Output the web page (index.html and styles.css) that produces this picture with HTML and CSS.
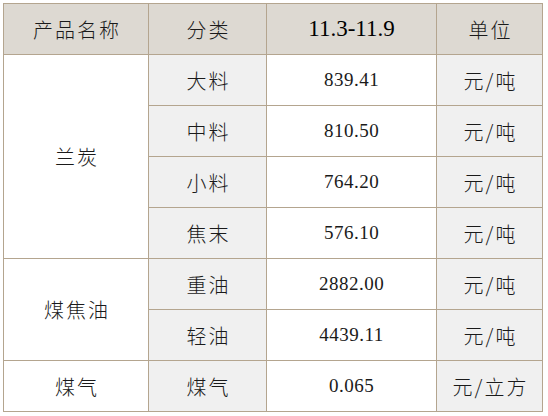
FILE: index.html
```html
<!DOCTYPE html>
<html lang="zh">
<head>
<meta charset="utf-8">
<link rel="stylesheet" href="styles.css">
</head>
<body>
<table class="price-table">
  <colgroup>
    <col class="c1"><col class="c2"><col class="c3"><col class="c4">
  </colgroup>
  <thead>
    <tr>
      <th class="cn">产品名称</th>
      <th class="cn">分类</th>
      <th class="date">11.3-11.9</th>
      <th class="cn">单位</th>
    </tr>
  </thead>
  <tbody>
    <tr>
      <td class="cn" rowspan="4">兰炭</td>
      <td class="cn gray">大料</td>
      <td class="num">839.41</td>
      <td class="cn gray">元/吨</td>
    </tr>
    <tr>
      <td class="cn gray">中料</td>
      <td class="num">810.50</td>
      <td class="cn gray">元/吨</td>
    </tr>
    <tr>
      <td class="cn gray">小料</td>
      <td class="num">764.20</td>
      <td class="cn gray">元/吨</td>
    </tr>
    <tr>
      <td class="cn gray">焦末</td>
      <td class="num">576.10</td>
      <td class="cn gray">元/吨</td>
    </tr>
    <tr>
      <td class="cn" rowspan="2">煤焦油</td>
      <td class="cn gray">重油</td>
      <td class="num">2882.00</td>
      <td class="cn gray">元/吨</td>
    </tr>
    <tr>
      <td class="cn gray">轻油</td>
      <td class="num">4439.11</td>
      <td class="cn gray">元/吨</td>
    </tr>
    <tr>
      <td class="cn">煤气</td>
      <td class="cn gray">煤气</td>
      <td class="num">0.065</td>
      <td class="cn gray">元/立方</td>
    </tr>
  </tbody>
</table>
</body>
</html>
```
FILE: styles.css
```css
html, body {
  margin: 0;
  padding: 0;
  background: #ffffff;
}
body {
  padding: 3px;
}
.price-table {
  border-collapse: collapse;
  table-layout: fixed;
  width: 539px;
}
.c1 { width: 145px; }
.c2 { width: 118px; }
.c3 { width: 170px; }
.c4 { width: 106px; }
.price-table th,
.price-table td {
  border: 1px solid #b4a58f;
  padding: 0;
  height: 50px;
  text-align: center;
  vertical-align: middle;
  color: #1a1a1a;
  font-weight: normal;
}
.price-table thead th {
  background: #ddd9d2;
}
.price-table td.gray {
  background: #f0f0f0;
}
.cn {
  font-family: "Noto Sans CJK SC", sans-serif;
  font-weight: 300;
  font-size: 20px;
  letter-spacing: 2px;
  text-indent: 2px;
}
.price-table th.cn,
.price-table td.cn {
  font-weight: 300;
}
.date {
  font-family: "Liberation Serif", serif;
  font-size: 23px;
  color: #000;
}
.price-table th.date {
  color: #000;
}
.num {
  font-family: "Liberation Serif", serif;
  font-size: 19px;
  letter-spacing: 0.5px;
}
```
